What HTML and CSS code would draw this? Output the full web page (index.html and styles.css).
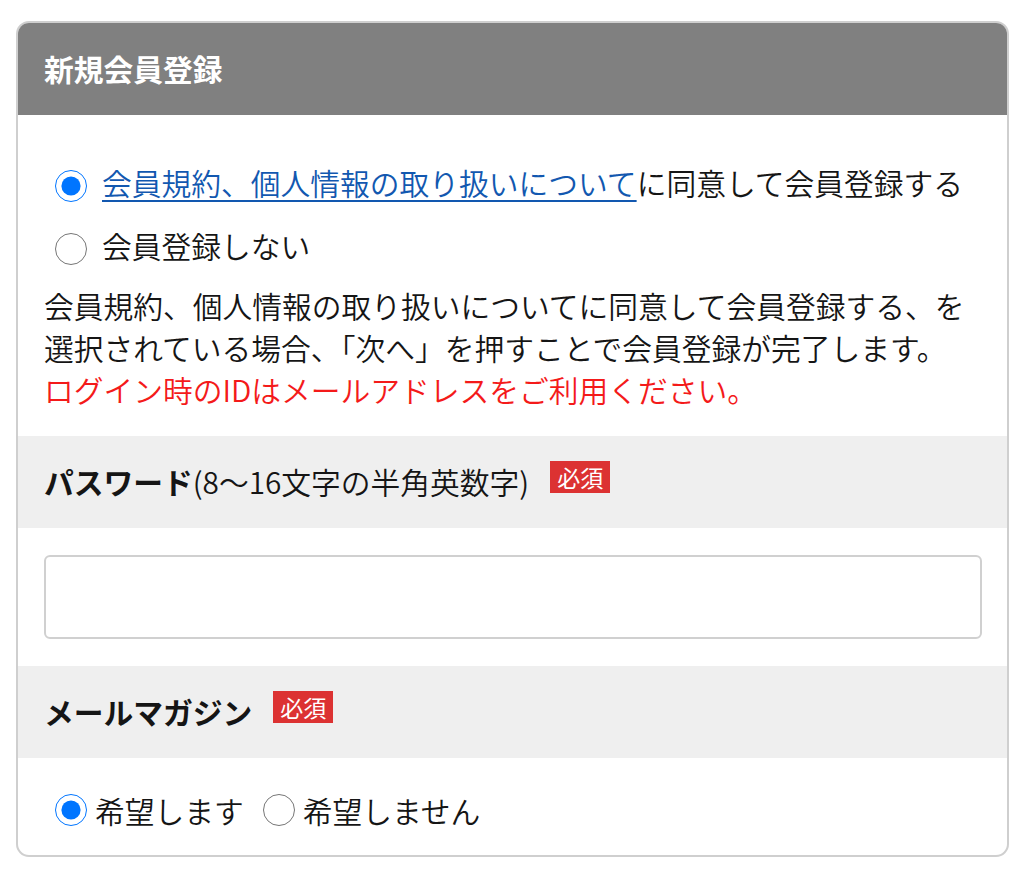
FILE: index.html
```html
<!DOCTYPE html>
<html lang="ja">
<head>
<meta charset="utf-8">
<title>新規会員登録</title>
<link rel="stylesheet" href="styles.css">
</head>
<body>
<section class="card">
  <h2 class="card-title">新規会員登録</h2>
  <div class="intro">
    <label class="choice-row">
      <input type="radio" name="member" class="radio" checked>
      <span><a href="#" class="terms-link">会員規約、個人情報の取り扱いについて</a>に同意して会員登録する</span>
    </label>
    <label class="choice-row">
      <input type="radio" name="member" class="radio">
      <span>会員登録しない</span>
    </label>
    <p class="note">会員規約、個人情報の取り扱いについてに同意して会員登録する、を選択されている場合、「次へ」を押すことで会員登録が完了します。<br><span class="warn">ログイン時のIDはメールアドレスをご利用ください。</span></p>
  </div>
  <div class="field-head">
    <span class="field-label"><b>パスワード</b>(8〜16文字の半角英数字)</span>
    <span class="badge">必須</span>
  </div>
  <div class="field-body">
    <input type="password" class="text-input">
  </div>
  <div class="field-head">
    <span class="field-label"><b>メールマガジン</b></span>
    <span class="badge">必須</span>
  </div>
  <div class="field-body radios">
    <label class="inline-choice">
      <input type="radio" name="mail" class="radio small-gap" checked>
      <span>希望します</span>
    </label>
    <label class="inline-choice">
      <input type="radio" name="mail" class="radio small-gap">
      <span>希望しません</span>
    </label>
  </div>
</section>
</body>
</html>
```

FILE: styles.css
```css
html, body {
  margin: 0;
  padding: 0;
  background: #fff;
}

body {
  font-family: "Noto Sans CJK JP", "Noto Sans", sans-serif;
  font-size: 29.75px;
  font-weight: 350;
  color: #151515;
}

.card {
  box-sizing: border-box;
  width: 993px;
  margin: 21px 0 0 16px;
  border: 2px solid #cfcfcf;
  border-radius: 13px;
  overflow: hidden;
  background: #fff;
}

.card-title {
  margin: 0;
  height: 92px;
  padding: 0 26px;
  display: flex;
  align-items: center;
  background: #808080;
  color: #fff;
  font-size: 29.75px;
  font-weight: 700;
  line-height: 1;
}

.intro {
  padding: 35px 26px 26px;
}

.choice-row {
  display: flex;
  align-items: center;
  height: 63px;
  line-height: 42px;
}

.radio {
  width: 32px;
  height: 32px;
  margin: 9px 15px 0 11px;
  flex: none;
}

.radio.small-gap {
  margin: 0 8px 0 11px;
}

.terms-link {
  color: #1258b0;
  text-decoration: underline;
  text-underline-offset: 5px;
  text-decoration-thickness: 2px;
}

.note {
  margin: 8px 0 0;
  line-height: 42px;
}

.warn {
  color: #f41a1a;
}

.field-head {
  height: 92px;
  padding: 0 26px;
  display: flex;
  align-items: center;
  gap: 21px;
  background: #efefef;
}

.field-label {
  line-height: 1;
}

.field-label b {
  font-weight: 700;
}

.badge {
  display: inline-flex;
  align-items: center;
  justify-content: center;
  width: 60px;
  height: 32px;
  margin-top: -10px;
  background: #dc3232;
  color: #fff;
  font-size: 23px;
  font-weight: 400;
  line-height: 1;
}

.field-body {
  padding: 27px 25px 27px 26px;
}

.text-input {
  box-sizing: border-box;
  display: block;
  width: 100%;
  height: 84px;
  border: 2px solid #d0d0d0;
  border-radius: 6px;
  font-size: 29.75px;
  padding: 0 12px;
  outline: none;
}

.radios {
  display: flex;
  align-items: center;
  gap: 19px;
  padding: 26px 26px 19px;
  height: 52px;
}

.inline-choice {
  display: flex;
  align-items: center;
}

.inline-choice + .inline-choice .radio {
  margin-left: 0;
}
```
